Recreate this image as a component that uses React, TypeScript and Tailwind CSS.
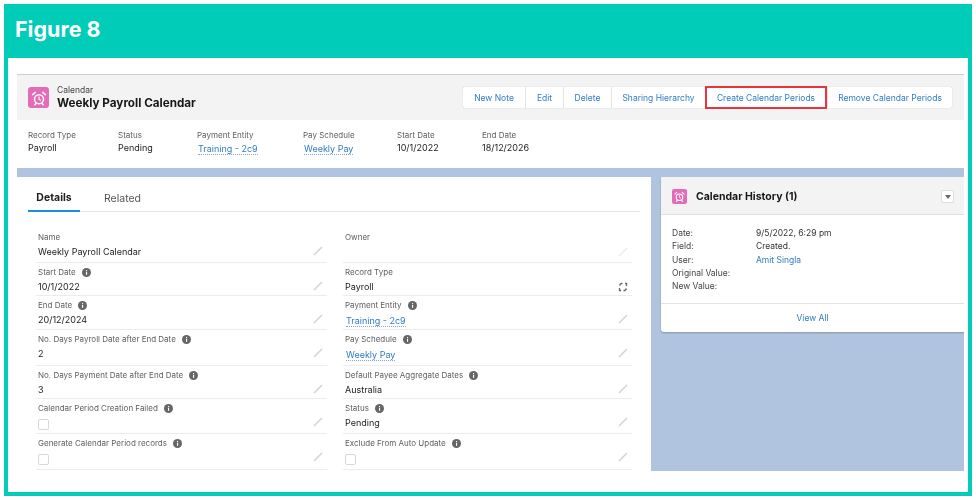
import React from "react";

const Alarm = ({ s }: { s: number }) => (
  <svg width={s} height={s} viewBox="0 0 24 24" fill="none">
    <circle cx="12" cy="13.5" r="6" stroke="white" strokeWidth="2" />
    <path d="M12 10.5v3.2l2 1.3" stroke="white" strokeWidth="1.5" strokeLinecap="round" />
    <path d="M3.5 7.5 7 4.5M20.5 7.5 17 4.5M8 19l-1.5 2M16 19l1.5 2" stroke="white" strokeWidth="2" strokeLinecap="round" />
  </svg>
);

const Info = () => (
  <svg width="9" height="9" viewBox="0 0 9 9" className="shrink-0">
    <circle cx="4.5" cy="4.5" r="4.5" fill="#666" />
    <rect x="4" y="3.8" width="1.1" height="3" fill="white" />
    <rect x="4" y="2" width="1.1" height="1.1" fill="white" />
  </svg>
);

const Pencil = ({ faint }: { faint?: boolean }) => (
  <svg width="10" height="10" viewBox="0 0 10 10" className={`shrink-0 ${faint ? "" : "mb-[3px]"}`}>
    <path d="M1 9 9 1" stroke={faint ? "#ececec" : "#d4d4d4"} strokeWidth="1.6" />
  </svg>
);

const Swap = () => (
  <svg width="10" height="10" viewBox="0 0 10 10" fill="none" className="shrink-0">
    <path d="M3 1.5 1.5 3.5M3 1.5h1.5M1.5 6v2.5H3M7 8.5 8.5 6.5M7 8.5H5.5M8.5 4V1.5H7" stroke="#666" strokeWidth="1.3" />
  </svg>
);

type F = { label: string; value?: string; info?: boolean; link?: boolean; check?: boolean; swap?: boolean; faint?: boolean };

const rows: { h: string; l: F; r: F }[] = [
  { h: "h-[34px]", l: { label: "Name", value: "Weekly Payroll Calendar" }, r: { label: "Owner", faint: true } },
  { h: "h-[33px]", l: { label: "Start Date", value: "10/1/2022", info: true }, r: { label: "Record Type", value: "Payroll", swap: true } },
  { h: "h-[34px]", l: { label: "End Date", value: "20/12/2024", info: true }, r: { label: "Payment Entity", value: "Training - 2c9", info: true, link: true } },
  { h: "h-[36px]", l: { label: "No. Days Payroll Date after End Date", value: "2", info: true }, r: { label: "Pay Schedule", value: "Weekly Pay", info: true, link: true } },
  { h: "h-[33px]", l: { label: "No. Days Payment Date after End Date", value: "3", info: true }, r: { label: "Default Payee Aggregate Dates", value: "Australia", info: true } },
  { h: "h-[35px]", l: { label: "Calendar Period Creation Failed", check: true, info: true }, r: { label: "Status", value: "Pending", info: true } },
  { h: "h-[36px]", l: { label: "Generate Calendar Period records", check: true, info: true }, r: { label: "Exclude From Auto Update", check: true, info: true } },
];

const Field = ({ f, h, first }: { f: F; h: string; first: boolean }) => (
  <div className={`${h} border-b border-[#ececec] pl-[2px] pr-[4px] ${first ? "pt-[2px]" : "pt-[3px]"}`}>
    <div className="flex h-[12px] items-center gap-[6px] text-[8px] leading-[12px] text-[#5e5e5e]">
      <span>{f.label}</span>
      {f.info && <Info />}
    </div>
    <div className="mt-[3px] flex h-[12px] items-center justify-between">
      {f.check ? (
        <span className="mt-[2px] size-[11px] rounded-[2px] border border-[#d8d8d8] bg-white" />
      ) : f.link ? (
        <span className="ml-[1px] mt-[1px] border-b border-dotted border-[#7fa8d8] text-[9px] leading-[11px] text-[#2f7cc4]">{f.value}</span>
      ) : (
        <span className="text-[9px] leading-[12px] text-[#222]">{f.value}</span>
      )}
      {f.swap ? <Swap /> : <Pencil faint={f.faint} />}
    </div>
  </div>
);

const Head = ({ label, value, link, w }: { label: string; value: string; link?: boolean; w: string }) => (
  <div className={w}>
    <div className="text-[8px] leading-[12px] text-[#5e5e5e]">{label}</div>
    {link ? (
      <div className="ml-[1px] mt-[2px] w-fit border-b border-dotted border-[#7fa8d8] text-[9px] leading-[11px] text-[#2f7cc4]">{value}</div>
    ) : (
      <div className="mt-[1px] text-[9px] leading-[12px] text-[#222]">{value}</div>
    )}
  </div>
);

const Btn = ({ t, w, red }: { t: string; w: string; red?: boolean }) => (
  <div
    className={`${w} flex items-center justify-center pt-[1px] text-[8.5px] text-[#2f7cc4] ${
      red ? "z-10 -my-[1px] h-[23px] border-2 border-[#e8343a] bg-white" : "h-[21px] border-l border-[#e4e4e4] first:border-l-0"
    }`}
  >
    {t}
  </div>
);

const Hist = ({ k, v, link }: { k: string; v?: string; link?: boolean }) => (
  <div className="flex h-[13.2px] items-center text-[8.5px] text-[#444]">
    <span className="w-[84px]">{k}</span>
    {v && <span className={link ? "text-[#2f7cc4]" : "text-[#333]"}>{v}</span>}
  </div>
);

export default function App() {
  return (
    <div className="h-[500px] w-[976px] overflow-hidden bg-white p-[4px] font-['Inter',sans-serif]">
      <div className="flex h-[492px] w-[968px] flex-col bg-[#00ccb8] px-[4px] pb-[4px]">
        <div className="flex h-[54px] items-center pl-[7px] pb-[3px] text-[21.5px] font-bold text-white">Figure 8</div>
        <div className="flex-1 bg-white pl-[9px] pr-[4px] pt-[16px] blur-[0.5px]">
          <div className="flex h-[46px] items-center justify-between border-t border-[#cfcfcf] bg-[#f3f3f3] pl-[11px] pr-[12px]">
            <div className="flex items-center gap-[8px]">
              <div className="flex size-[21px] items-center justify-center rounded-[3px] bg-[#e56bb9]">
                <Alarm s={18} />
              </div>
              <div>
                <div className="text-[8.5px] leading-[11px] text-[#444]">Calendar</div>
                <div className="text-[11.7px] font-bold leading-[14px] text-[#181818]">Weekly Payroll Calendar</div>
              </div>
            </div>
            <div className="flex h-[21px] items-center rounded-[2px] bg-white shadow-[0_0_1px_#aaa]">
              <Btn t="New Note" w="w-[62px]" />
              <Btn t="Edit" w="w-[38px]" />
              <Btn t="Delete" w="w-[48px]" />
              <Btn t="Sharing Hierarchy" w="w-[94px]" />
              <Btn t="Create Calendar Periods" w="w-[122px]" red />
              <Btn t="Remove Calendar Periods" w="w-[125px]" />
            </div>
          </div>
          <div className="flex h-[48px] items-start bg-white pl-[11px] pt-[9px]">
            <Head label="Record Type" value="Payroll" w="w-[90px]" />
            <Head label="Status" value="Pending" w="w-[79px]" />
            <Head label="Payment Entity" value="Training - 2c9" link w="w-[106px]" />
            <Head label="Pay Schedule" value="Weekly Pay" link w="w-[94px]" />
            <Head label="Start Date" value="10/1/2022" w="w-[85px]" />
            <Head label="End Date" value="18/12/2026" w="w-[80px]" />
          </div>
          <div className="h-[9px] bg-[#b0c4df]" />
          <div className="flex h-[294px] w-[947px]">
            <div className="w-[634px] bg-white">
              <div className="mx-[11px] flex h-[35px] items-start border-b border-[#e5e5e5]">
                <div className="flex h-[35px] w-[52px] items-center justify-center border-b-2 border-[#1b8fe0] pt-[9px] text-[10.5px] font-bold text-[#222]">
                  Details
                </div>
                <div className="ml-[24px] flex h-[35px] items-center pt-[9px] text-[10.5px] text-[#555]">Related</div>
              </div>
              <div className="ml-[19px] mt-[17px] grid w-[596px] grid-cols-[291px_289px] gap-x-[16px]">
                {rows.map((r, i) => (
                  <React.Fragment key={i}>
                    <Field f={r.l} h={r.h} first={i === 0} />
                    <Field f={r.r} h={r.h} first={i === 0} />
                  </React.Fragment>
                ))}
              </div>
            </div>
            <div className="flex-1 overflow-hidden bg-[#b0c4df] pl-[10px]">
              <div className="h-[155px] rounded-bl-[3px] bg-white shadow-[0_1px_2px_#8896a8]">
                <div className="flex h-[38px] items-center border-b border-[#e0e0e0] bg-[#f3f3f3] pl-[11px] pr-[10px] pt-[2px]">
                  <div className="flex size-[15px] items-center justify-center rounded-[2px] bg-[#e56bb9]">
                    <Alarm s={13} />
                  </div>
                  <span className="ml-[9px] flex-1 text-[10.5px] font-bold text-[#181818]">Calendar History (1)</span>
                  <div className="flex size-[13px] items-center justify-center rounded-[2px] border border-[#ddd] bg-white">
                    <span className="border-x-[3px] border-t-[4px] border-x-transparent border-t-[#666]" />
                  </div>
                </div>
                <div className="h-[89px] border-b border-[#e3e3e3] pl-[11px] pt-[12px]">
                  <Hist k="Date:" v="9/5/2022, 6:29 pm" />
                  <Hist k="Field:" v="Created." />
                  <Hist k="User:" v="Amit Singla" link />
                  <Hist k="Original Value:" />
                  <Hist k="New Value:" />
                </div>
                <div className="flex h-[28px] items-center justify-center text-[8.5px] text-[#2f7cc4]">View All</div>
              </div>
            </div>
          </div>
        </div>
      </div>
    </div>
  );
}
